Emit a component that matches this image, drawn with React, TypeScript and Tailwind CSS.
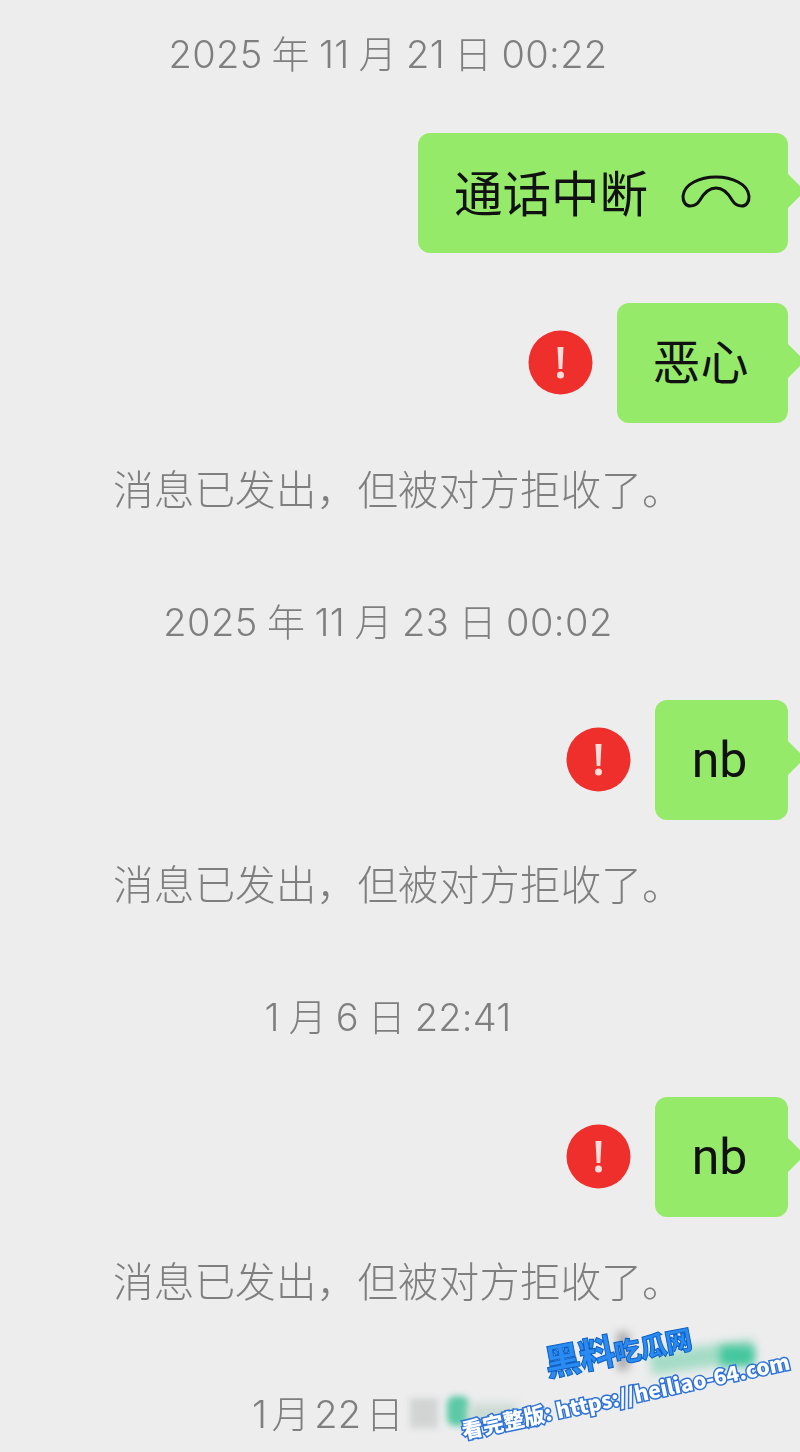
import React from "react";

const font = "[font-family:'Noto_Sans_CJK_SC','Noto_Sans',sans-serif]";

function DateLine({ children, mt, className = "" }: { children: React.ReactNode; mt: string; className?: string }) {
  return (
    <div className={`${mt} flex h-[50px] items-center justify-center pr-6 font-['Inter','Noto_Sans_CJK_SC',sans-serif] text-[38px] font-light leading-[50px] text-[#7f7f7f] whitespace-pre [word-spacing:-2px] ${className}`}>
      {children}
    </div>
  );
}

function Bubble({ children, className }: { children: React.ReactNode; className: string }) {
  return (
    <div className={`relative flex h-[120px] items-center rounded-[12px] bg-[#95ea69] text-[#111] ${className}`}>
      {children}
      <div className="absolute right-[-12px] top-[46px] h-[24px] w-[24px] rotate-45 bg-[#95ea69]" />
    </div>
  );
}

function Alert() {
  return (
    <svg width="65" height="65" viewBox="0 0 65 65" className="mb-[1px] ml-[1px] shrink-0">
      <circle cx="32.500" cy="32.500" r="32" fill="#ef2f2c" />
      <path d="M29.500 17h6l-1.200 22h-3.600z" fill="#fbdcd8" />
      <circle cx="32.500" cy="45" r="3.500" fill="#fbdcd8" />
    </svg>
  );
}

function Notice({ mt }: { mt: string }) {
  return (
    <div className={`${mt} h-[50px] pl-[113px] text-[40.7px] font-light leading-[50px] text-[#7f7f7f] whitespace-pre`}>
      消息已发出，但被对方拒收了。
    </div>
  );
}

function HangUp() {
  return (
    <svg width="70" height="34" viewBox="0 0 70 34" fill="none" stroke="#111" strokeWidth="3" strokeLinejoin="round" className="shrink-0">
      <path d="M2 21C3 9 19 2 35 2S67 9 68 21C68.500 27 65 31 61 31C57 31 54 30 51 25C47 18 42 13 35 13C28 13 23 18 19 25C16 30 13 31 9 31C5 31 1.700 27 2 21Z" />
    </svg>
  );
}

export default function App() {
  return (
    <div className={`relative h-[1452px] w-[800px] overflow-hidden bg-[#ededee] ${font}`}>
      <div className="flex flex-col blur-[0.6px]">
        <DateLine mt="mt-[29px]" className="tracking-[0.35px]">2025 年 11 月 21 日 00:22</DateLine>

        <div className="mt-[54px] flex justify-end pr-3">
          <Bubble className="w-[370px] pl-[36px] text-[48.500px]">
            <span className="mb-[4px] leading-none">通话中断</span>
            <span className="ml-[33px] mb-[3px]"><HangUp /></span>
          </Bubble>
        </div>

        <div className="mt-[50px] flex items-center justify-end gap-[24px] pr-3">
          <Alert />
          <Bubble className="w-[171px] justify-center text-[48px]">
            <span className="mb-[9px] mr-[4px] leading-none">恶心</span>
          </Bubble>
        </div>

        <Notice mt="mt-[40px]" />
        <DateLine mt="mt-[84px]" className="tracking-[0.45px]">2025 年 11 月 23 日 00:02</DateLine>

        <div className="mt-[53px] flex items-center justify-end gap-[24px] pr-3">
          <Alert />
          <Bubble className="w-[133px] justify-center font-['Roboto',sans-serif] text-[50px]">
            <span className="mr-[4px]">nb</span>
          </Bubble>
        </div>

        <Notice mt="mt-[38px]" />
        <DateLine mt="mt-[84px]" className="tracking-[0.2px]">1 月 6 日 22:41</DateLine>

        <div className="mt-[55px] flex items-center justify-end gap-[24px] pr-3">
          <Alert />
          <Bubble className="w-[133px] justify-center font-['Roboto',sans-serif] text-[50px]">
            <span className="mr-[4px]">nb</span>
          </Bubble>
        </div>

        <Notice mt="mt-[38px]" />

        <div className="mt-[84px] flex h-[50px] items-center pl-[252px] font-['Inter','Noto_Sans_CJK_SC',sans-serif] text-[38px] font-light text-[#7f7f7f] whitespace-pre [word-spacing:-6px]">
          1 月 22 日
        </div>
      </div>

      <div className="absolute left-[410px] top-[1398px] h-[30px] w-[28px] bg-[#d2d4d3] blur-[3px]" />
      <div className="absolute left-[447px] top-[1396px] h-[30px] w-[22px] rounded-[8px] bg-[#5cc9a6] blur-[3px]" />
      <div className="absolute left-[468px] top-[1404px] h-[22px] w-[50px] bg-[#cbdad3] blur-[5px]" />
      <div className="absolute left-[650px] top-[1346px] h-[22px] w-[104px] -rotate-[8deg] bg-[#a5dcc6] blur-[5px]" />
      <div className="absolute left-[720px] top-[1346px] h-[20px] w-[34px] bg-[#45c79e] blur-[4px]" />
      <div className="absolute left-[617px] top-[1332px] h-[38px] w-[12px] bg-[#a9abaa] blur-[4px]" />

      <div className="absolute left-[545px] top-[1341px] flex origin-left -rotate-[11deg] items-baseline font-['Noto_Sans_CJK_SC',sans-serif] font-black leading-[40px] text-[#2a8cf2] whitespace-pre [-webkit-text-stroke:1px_#0d5fc4]">
        <span className="text-[36px] tracking-[-1px]">黑料</span>
        <span className="text-[27px] tracking-[-1px]">吃瓜网</span>
      </div>
      <div className="absolute left-[462px] top-[1415px] origin-left -rotate-[12deg] font-['Noto_Sans_CJK_SC',sans-serif] text-[21px] font-black leading-[30px] text-white whitespace-pre [-webkit-text-stroke:3px_#2f72d8] [paint-order:stroke_fill]">
        看完整版: https://heiliao-64.com
      </div>
    </div>
  );
}
